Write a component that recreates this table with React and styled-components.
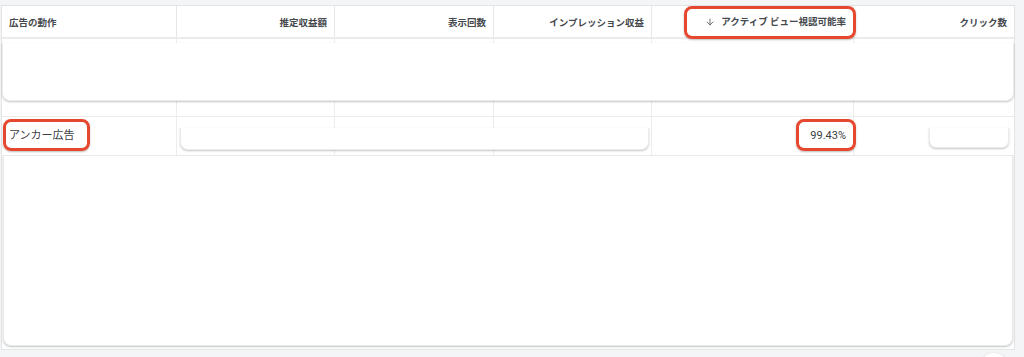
import React from 'react'
import styled, { createGlobalStyle } from 'styled-components'
import { ArrowDown } from 'lucide-react'

const GlobalStyle = createGlobalStyle`
*, *::before, *::after { box-sizing: border-box; }
body {
    margin: 0;
    background: #f4f5f7;
    font-family: "Roboto", "Noto Sans CJK JP", "Noto Sans", sans-serif;
    color: #3c4043;
    overflow: hidden;
}
`

const columns = [
    { label: '広告の動作', align: 'left' },
    { label: '推定収益額' },
    { label: '表示回数' },
    { label: 'インプレッション収益' },
    { label: 'アクティブ ビュー視認可能率', sorted: true },
    { label: 'クリック数' },
]

function App() {
    const last = columns.length
    return (
        <Page>
            <GlobalStyle />
            <Table>
                <Header>
                    {columns.map((col, i) => (
                        <HeadCell key={i} $left={col.align === 'left'} $last={i === last - 1}>
                            {col.sorted ? (
                                <Marked $t={-9} $r={-10} $b={-10} $l={-21} $gap={6}>
                                    <ArrowDown size={10} strokeWidth={2.2} />
                                    <span>{col.label}</span>
                                </Marked>
                            ) : col.label}
                        </HeadCell>
                    ))}
                </Header>

                <Row $h={77}>
                    {columns.map((_, i) => <Cell key={i} $col={i + 1} $last={i === last - 1} />)}
                    <Placeholder $from={1} $to={-1} $top={4} $h={58} $mx={0} />
                </Row>

                <Row $h={38}>
                    <Cell $col={1} $left>
                        <Marked $t={-10} $r={-15} $b={-8} $l={-6}>アンカー広告</Marked>
                    </Cell>
                    <Cell $col={2} />
                    <Cell $col={3} />
                    <Cell $col={4} />
                    <Cell $col={5}>
                        <Marked $t={-10} $r={-10} $b={-8} $l={-14}>99.43%</Marked>
                    </Cell>
                    <Cell $col={6} $last />
                    <Placeholder $from={2} $to={5} $top={11} $h={22} $mx={3} />
                    <Chip />
                </Row>

                <BigCard />
            </Table>
            <Footer>
                <Fab />
            </Footer>
        </Page>
    )
}

export default App

const Page = styled.div`
height: 357px;
padding: 5px 0 0 1px;
overflow: hidden;
`
const Table = styled.div`
width: 1014px;
background: #fff;
border: 1px solid #e3e4e6;
padding-bottom: 3px;
`
const grid = `
display: grid;
grid-template-columns: 175px 158px 159px 158px 202px 160px;
`
const Header = styled.div`
${grid}
height: 33px;
border-bottom: 2px solid #ebebeb;
`
const HeadCell = styled.div`
display: flex;
align-items: center;
justify-content: ${p => p.$left ? 'flex-start' : 'flex-end'};
padding: 0 7px;
font-size: 9.5px;
font-weight: 700;
color: #45484c;
white-space: nowrap;
border-right: ${p => p.$last ? 'none' : '1px solid #e6e7e9'};
`
const Row = styled.div`
${grid}
grid-template-rows: ${p => p.$h}px;
border-bottom: 1px solid #ececec;
`
const Cell = styled.div`
grid-row: 1;
grid-column: ${p => p.$col};
display: flex;
align-items: center;
justify-content: ${p => p.$left ? 'flex-start' : 'flex-end'};
padding: 0 7px;
font-size: 11px;
color: #3c4043;
white-space: nowrap;
border-right: ${p => p.$last ? 'none' : '1px solid #ededed'};
`
const Marked = styled.span`
position: relative;
display: inline-flex;
align-items: center;
gap: ${p => p.$gap || 3}px;
line-height: 14px;

svg { color: #5f6368; }

&::after {
    content: '';
    position: absolute;
    top: ${p => p.$t}px;
    right: ${p => p.$r}px;
    bottom: ${p => p.$b}px;
    left: ${p => p.$l}px;
    border: 3px solid #e5472f;
    border-radius: 8px;
    box-shadow: 0 1px 2px rgba(0,0,0,0.25);
}
`
const Placeholder = styled.div`
grid-row: 1;
grid-column: ${p => p.$from} / ${p => p.$to};
align-self: start;
margin: ${p => p.$top}px ${p => p.$mx}px 0;
height: ${p => p.$h}px;
background: #fff;
border: 1px solid #ececec;
border-top: none;
border-radius: 0 0 8px 8px;
box-shadow: 0 1px 2px rgba(60,64,67,0.3);
z-index: 1;
`
const Chip = styled(Placeholder).attrs({ $from: 6, $to: 7, $top: 11, $h: 20, $mx: 0 })`
justify-self: end;
width: 80px;
margin-right: 5px;
border-radius: 0 0 7px 7px;
`
const BigCard = styled.div`
height: 190px;
margin: 0 1px;
background: #fff;
border: 1px solid #e8e8e8;
border-top: none;
border-radius: 0 0 8px 8px;
box-shadow: 0 1px 2px rgba(60,64,67,0.3);
`
const Footer = styled.div`
display: flex;
justify-content: flex-end;
padding: 3px 16px 0 0;
`
const Fab = styled.div`
width: 28px;
height: 28px;
border-radius: 50%;
background: #fff;
box-shadow: 0 1px 3px rgba(0,0,0,0.2);
`
